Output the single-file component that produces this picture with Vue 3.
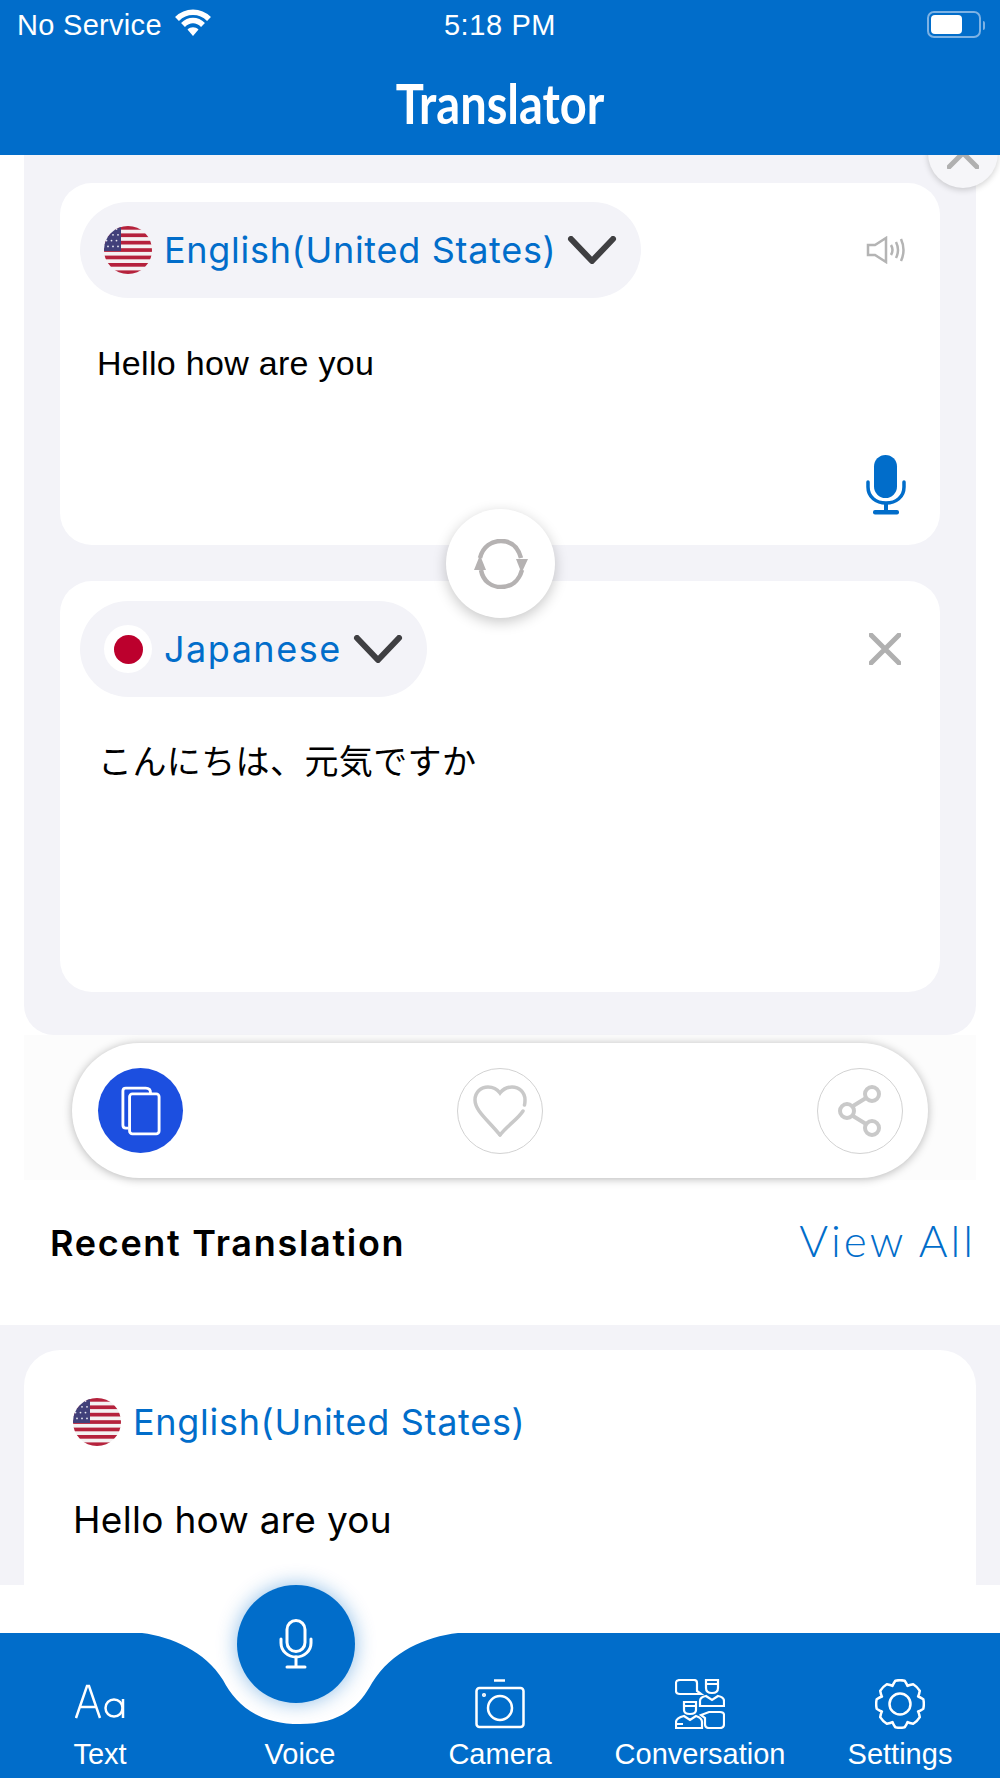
<script setup>
const stripes = [0, 1, 2, 3, 4, 5, 6].map((i) => i * 7.4);
const stars = [];
for (let r = 0; r < 4; r++) for (let c = 0; c < 3; c++) stars.push({ x: 2.500 + c * 5 + (r % 2) * 1.500, y: 3 + r * 5.800 });
const navItems = [
  { id: 'text', label: 'Text' },
  { id: 'voice', label: 'Voice' },
  { id: 'camera', label: 'Camera' },
  { id: 'conv', label: 'Conversation' },
  { id: 'settings', label: 'Settings' },
];
const gearPath = (() => {
  const n = 8, cx = 25, cy = 25;
  let d = '';
  const step = (Math.PI * 2) / n;
  for (let i = 0; i < n; i++) {
    const a = i * step - Math.PI / 2;
    const pt = (o, r) => (cx + Math.cos(a + o) * r).toFixed(1) + ' ' + (cy + Math.sin(a + o) * r).toFixed(1);
    d += (i === 0 ? 'M' + pt(-0.2, 23.8) : 'L' + pt(-0.2, 23.8));
    d += ' Q' + pt(0, 24.4) + ' ' + pt(0.2, 23.8);
    d += ' Q' + pt(step / 2 - 0.06, 21.2) + ' ' + pt(step / 2, 19.6);
    d += ' Q' + pt(step / 2 + 0.06, 21.2) + ' ' + pt(step - 0.2, 23.8) + ' ';
  }
  return d + 'Z';
})();
</script>

<template>
  <div class="screen">
    <header class="header">
      <div class="status">
        <div class="status-left">
          <span>No Service</span>
          <svg class="wifi" viewBox="0 0 38 28" width="38" height="28">
            <path d="M3 10 C12 1 26 1 35 10" />
            <path d="M9 16 C15 10 23 10 29 16" />
            <path class="wifi-dot" d="M13.500 20.500 C16.500 17.500 21.500 17.500 24.500 20.500 L19 27 Z" />
          </svg>
        </div>
        <span class="time">5:18 PM</span>
        <div class="battery">
          <div class="battery-body"><div class="battery-fill"></div></div>
          <div class="battery-cap"></div>
        </div>
      </div>
      <h1 class="title">Translator</h1>
    </header>

    <main class="main">
      <section class="panel">
        <div class="card card-top">
          <div class="card-head">
            <button class="pill">
              <svg class="flag" viewBox="0 0 48 48" width="48" height="48">
                <rect width="48" height="48" fill="#f4f2f2" />
                <rect v-for="y in stripes" :key="y" x="0" :y="y" width="48" height="3.700" fill="#b5223c" />
                <rect width="17" height="25" fill="#41407a" />
                <circle v-for="(s, i) in stars" :key="i" :cx="s.x" :cy="s.y" r="0.900" fill="#e8e8f2" />
              </svg>
              <span class="lang">English(United States)</span>
              <svg class="chev" viewBox="0 0 50 28" width="50" height="28"><path d="M4 3 L25 25 L46 3" /></svg>
            </button>
            <svg class="speaker" viewBox="0 0 40 28" width="40" height="28">
              <path d="M2 9 H9 L20 2 V26 L9 19 H2 Z" />
              <path d="M25 9 Q28 14 25 19" />
              <path d="M30 6 Q34 14 30 22" />
              <path d="M35 3 Q40 14 35 25" />
            </svg>
          </div>
          <p class="source">Hello how are you</p>
          <svg class="mic-blue" viewBox="0 0 40 60" width="40" height="60">
            <rect x="8" y="0" width="23" height="43" rx="11.500" fill="#016dca" />
            <path d="M2 27 V32 C2 42 10 48 20 48 C30 48 38 42 38 32 V27" fill="none" stroke="#016dca" stroke-width="3.500" stroke-linecap="round" />
            <path d="M20 48 V57" stroke="#016dca" stroke-width="4" />
            <rect x="7" y="55" width="26" height="4.500" rx="2" fill="#016dca" />
          </svg>
        </div>

        <div class="card card-bottom">
          <div class="card-head">
            <button class="pill">
              <span class="flag-jp"><span class="flag-jp-dot"></span></span>
              <span class="lang lang-wide">Japanese</span>
              <svg class="chev" viewBox="0 0 50 28" width="50" height="28"><path d="M4 3 L25 25 L46 3" /></svg>
            </button>
            <svg class="close-x" viewBox="0 0 32 32" width="32" height="32"><path d="M2 2 L30 30 M30 2 L2 30" /></svg>
          </div>
          <p class="target">こんにちは、元気ですか</p>
        </div>

        <button class="swap">
          <svg viewBox="0 0 56 50" width="56" height="50">
            <path d="M7 19 C10 7 19 2 28 2 C38 2 45 8 48 19" />
            <path d="M49 31 C46 42 38 48 28 48 C18 48 10 42 8 31" />
            <path class="swap-head" d="M43 20 L55 20 L48.500 34 Z" />
            <path class="swap-head" d="M1 31 L13 31 L7 16 Z" />
          </svg>
        </button>
        <button class="dismiss">
          <svg viewBox="0 0 32 32" width="32" height="32"><path d="M2 2 L30 30 M30 2 L2 30" /></svg>
        </button>
      </section>

      <div class="actions">
        <div class="actions-pill">
          <button class="round round-on">
            <svg viewBox="0 0 42 52" width="40" height="50" fill="none" stroke="#fff" stroke-width="3">
              <path d="M8 44 H5 Q2 44 2 41 V5 Q2 2 5 2 H26 Q31 2 31 7" />
              <rect x="9" y="8" width="31" height="42" rx="3" />
            </svg>
          </button>
          <button class="round">
            <svg viewBox="0 0 54 52" width="54" height="52" fill="none" stroke="#c9c9c9" stroke-width="3.500" stroke-linecap="round">
              <path d="M27 50 C16 36 2 26 2 15 C2 7 8 2 15 2 C20 2 24 4 27 8 C30 4 34 2 39 2 C46 2 52 7 52 15 C52 17 52 18 51.500 20" />
              <path d="M50 26 C45 34 36 39 27 50" />
            </svg>
          </button>
          <button class="round">
            <svg viewBox="0 0 44 52" width="44" height="52" fill="none" stroke="#c9c9c9" stroke-width="4">
              <circle cx="9" cy="26" r="7" />
              <circle cx="34" cy="9" r="7" />
              <circle cx="34" cy="43" r="7" />
              <path d="M15 21 L28 13 M15 31 L28 39" />
            </svg>
          </button>
        </div>
      </div>

      <div class="recent-head">
        <h2 class="recent-title">Recent Translation</h2>
        <a class="view-all">View All</a>
      </div>

      <section class="band">
        <article class="recent-card">
          <div class="recent-lang">
            <svg class="flag" viewBox="0 0 48 48" width="48" height="48">
              <rect width="48" height="48" fill="#f4f2f2" />
              <rect v-for="y in stripes" :key="y" x="0" :y="y" width="48" height="3.700" fill="#b5223c" />
              <rect width="17" height="25" fill="#41407a" />
              <circle v-for="(s, i) in stars" :key="i" :cx="s.x" :cy="s.y" r="0.900" fill="#e8e8f2" />
            </svg>
            <span class="lang">English(United States)</span>
          </div>
          <p class="recent-text">Hello how are you</p>
        </article>
      </section>
    </main>

    <nav class="nav">
      <svg class="nav-bg" viewBox="0 0 1000 145" width="1000" height="145">
        <path d="M0 0 H142 C172 4 205 18 223 47 C236 72 258 91 300 91 C342 91 360 72 372 50 C392 18 425 4 458 0 H1000 V145 H0 Z" fill="#016dca" />
      </svg>
      <div v-for="item in navItems" :key="item.id" class="nav-item">
        <div class="nav-icon">
          <svg v-if="item.id === 'text'" viewBox="0 0 50 50" width="50" height="50" class="ico">
            <path d="M1 39 L12 7 H14 L25 39 M5 28 H21" />
            <circle cx="39" cy="29" r="8.500" />
            <path d="M48 20 V39" />
          </svg>
          <svg v-else-if="item.id === 'camera'" viewBox="0 0 50 50" width="50" height="50" class="ico">
            <path d="M19 1.500 H30" />
            <rect x="1.500" y="9" width="47" height="39" rx="3" />
            <circle cx="25" cy="29" r="12" />
            <circle cx="9" cy="16" r="0.800" />
          </svg>
          <svg v-else-if="item.id === 'conv'" viewBox="0 0 50 50" width="50" height="50" class="ico ico-thin">
            <path d="M5 1 H19 Q22 1 22 4 V12 L26 15 H5 Q1 15 1 12 V4 Q1 1 5 1 Z" />
            <path d="M31 1 H43 V9 Q43 14 37 14 Q31 14 31 9 Z M31 5 H43" />
            <path d="M25 27 V22 Q25 18 31 17 L37 21 L43 17 Q49 18 49 22 V27 H25 Z" />
            <path d="M9 23 H21 V31 Q21 35 15 35 Q9 35 9 31 Z M9 27 H21" />
            <path d="M1 49 V43 Q1 39 9 37 L15 41 L21 37 Q27 39 27 43 V49 Z M1 45 H8" />
            <path d="M34 33 H45 Q49 33 49 36 V45 Q49 49 45 49 H34 Q30 49 30 45 V39 L26 36 Z" />
          </svg>
          <svg v-else-if="item.id === 'settings'" viewBox="0 0 50 50" width="50" height="50" class="ico">
            <path :d="gearPath" stroke-linejoin="round" />
            <circle cx="25" cy="25" r="10.500" />
          </svg>
        </div>
        <span class="nav-label">{{ item.label }}</span>
      </div>
      <button class="mic-fab">
        <svg viewBox="0 0 34 50" width="34" height="50" fill="none" stroke="#fff" stroke-width="3" stroke-linecap="round">
          <rect x="8" y="1.500" width="18" height="31" rx="9" />
          <path d="M2 20 V24 C2 32 9 38 17 38 C25 38 32 32 32 24 V20" />
          <path d="M17 38 V47 M8 48 H26" />
        </svg>
      </button>
    </nav>
  </div>
</template>

<style>
html, body { margin: 0; background: #fff; }
</style>

<style scoped>
.screen {
  width: 1000px;
  height: 1778px;
  display: flex;
  flex-direction: column;
  overflow: hidden;
  background: #fff;
  font-family: "Liberation Sans", Arial, sans-serif;
  position: relative;
}
button { border: 0; padding: 0; margin: 0; font: inherit; cursor: pointer; }
p, h1, h2 { margin: 0; }

.header {
  height: 155px;
  background: #016dca;
  color: #fff;
  position: relative;
  z-index: 2;
  flex: none;
}
.status {
  height: 50px;
  display: flex;
  align-items: center;
  justify-content: space-between;
  padding: 0 15px 0 17px;
  font-size: 29px;
  letter-spacing: 0.300px;
  position: relative;
}
.status-left { display: flex; align-items: center; gap: 12px; }
.wifi { fill: none; stroke: #fff; stroke-width: 5.500; margin-top: -4px; }
.wifi-dot { fill: #fff; stroke: none; }
.time { position: absolute; left: 0; right: 0; text-align: center; letter-spacing: 0.600px; }
.battery { display: flex; align-items: center; gap: 2px; }
.battery-body {
  width: 54px;
  height: 27px;
  border: 2px solid #7db2e4;
  border-radius: 7px;
  padding: 2px;
  box-sizing: border-box;
  display: flex;
  margin-top: -2px;
}
.battery-fill { width: 31px; background: #fff; border-radius: 4px; }
.battery-cap { width: 2px; height: 9px; background: #7db2e4; border-radius: 0 2px 2px 0; }
.title {
  text-align: center;
  font-family: "Lato", sans-serif;
  font-weight: 700;
  font-size: 47px;
  line-height: 50px;
  margin-top: 28px;
  transform: scaleY(1.160);
}

.main { flex: 1; position: relative; min-height: 0; }
.panel {
  margin: 0 24px;
  background: #f3f3f8;
  border-radius: 0 0 30px 30px;
  padding: 28px 36px 43px;
  display: flex;
  flex-direction: column;
  gap: 36px;
  height: 880px;
  box-sizing: border-box;
}
.card {
  background: #fff;
  border-radius: 32px;
  display: flex;
  flex-direction: column;
  box-sizing: border-box;
  padding: 19px 34px 30px 20px;
}
.card-top { height: 362px; }
.card-bottom { height: 411px; }
.card-head { display: flex; align-items: center; justify-content: space-between; }
.pill {
  height: 96px;
  border-radius: 48px;
  background: #f3f3f8;
  display: flex;
  align-items: center;
  padding: 0 24px;
  flex: none;
}
.flag { border-radius: 50%; flex: none; display: block; }
.lang {
  font-family: "Inter", sans-serif;
  font-size: 36px;
  letter-spacing: 0.700px;
  color: #016dca;
  margin-left: 12px;
  white-space: nowrap;
}
.lang-wide { letter-spacing: 1.500px; }
.chev { margin-left: 11px; fill: none; stroke: #3f3f42; stroke-width: 6; stroke-linecap: round; stroke-linejoin: round; }
.speaker { fill: none; stroke: #b4b4b4; stroke-width: 2.500; }
.source {
  font-size: 34px;
  letter-spacing: 0.300px;
  line-height: 40px;
  color: #000;
  margin: 45px 0 0 17px;
}
.mic-blue { align-self: flex-end; margin-top: auto; }
.card-bottom .card-head { margin-top: 1px; }
.close-x { fill: none; stroke: #b0b0b0; stroke-width: 5; stroke-linecap: round; margin-right: 5px; }
.flag-jp {
  width: 48px;
  height: 48px;
  border-radius: 50%;
  background: #fff;
  display: flex;
  align-items: center;
  justify-content: center;
}
.flag-jp-dot { width: 29px; height: 29px; border-radius: 50%; background: #bc002d; }
.target {
  font-family: "Liberation Sans", "Noto Sans CJK JP", sans-serif;
  font-size: 34px;
  letter-spacing: 0.400px;
  line-height: 44px;
  color: #000;
  margin: 43px 0 0 18px;
}
.swap {
  position: absolute;
  left: 446px;
  top: 354px;
  width: 109px;
  height: 109px;
  border-radius: 50%;
  background: #fff;
  box-shadow: 0 4px 14px rgba(0, 0, 0, 0.22);
  display: flex;
  align-items: center;
  justify-content: center;
}
.swap svg { fill: none; stroke: #b5b2b2; stroke-width: 4.500; }
.swap .swap-head { fill: #b5b2b2; stroke: none; }
.dismiss {
  position: absolute;
  left: 928px;
  top: -37px;
  width: 70px;
  height: 70px;
  border-radius: 50%;
  background: #f6f6f9;
  box-shadow: 0 2px 6px rgba(0, 0, 0, 0.18);
  display: flex;
  align-items: center;
  justify-content: center;
}
.dismiss svg { fill: none; stroke: #b0b0b0; stroke-width: 5; stroke-linecap: round; }

.actions {
  margin: 0 24px;
  height: 145px;
  background: #fcfcfc;
  padding: 8px 48px 2px;
  box-sizing: border-box;
}
.actions-pill {
  height: 135px;
  background: #fff;
  border-radius: 68px;
  box-shadow: 0 1px 10px rgba(0, 0, 0, 0.28);
  display: flex;
  align-items: center;
  justify-content: space-between;
  padding: 0 25px 0 26px;
}
.round {
  width: 86px;
  height: 86px;
  border-radius: 50%;
  background: #fff;
  border: 1.500px solid #d2d2d2;
  box-sizing: border-box;
  display: flex;
  align-items: center;
  justify-content: center;
}
.round-on { background: #1c4fe0; border: 0; width: 85px; height: 85px; }

.recent-head {
  height: 145px;
  padding: 0 24px 20px 50px;
  box-sizing: border-box;
  display: flex;
  align-items: center;
  justify-content: space-between;
}
.recent-title {
  font-family: "Inter", sans-serif;
  font-weight: 600;
  font-size: 36px;
  letter-spacing: 1.700px;
  color: #000;
}
.view-all {
  font-family: "Lato", sans-serif;
  font-weight: 300;
  font-size: 44px;
  letter-spacing: 3px;
  color: #016dca;
  margin-top: -6px;
}
.band {
  height: 260px;
  background: #f3f3f8;
  padding: 25px 24px 0;
  box-sizing: border-box;
}
.recent-card {
  height: 235px;
  background: #fff;
  border-radius: 36px 36px 0 0;
  padding: 48px 49px 0;
  box-sizing: border-box;
}
.recent-lang { display: flex; align-items: center; }
.recent-text {
  font-family: "Inter", sans-serif;
  font-size: 37px;
  letter-spacing: 0.300px;
  line-height: 44px;
  color: #000;
  margin-top: 52px;
}

.nav {
  height: 145px;
  flex: none;
  position: relative;
  display: grid;
  grid-template-columns: repeat(5, 200px);
  color: #fff;
}
.nav-bg { position: absolute; left: 0; top: 0; display: block; }
.nav-item {
  position: relative;
  display: flex;
  flex-direction: column;
  align-items: center;
  padding-top: 46px;
}
.nav-icon { height: 50px; }
.ico { fill: none; stroke: #fff; stroke-width: 2.500; display: block; }
.ico-thin { stroke-width: 2.200; }
.nav-label { font-size: 29px; line-height: 32px; margin-top: 9px; }
.mic-fab {
  position: absolute;
  left: 237px;
  top: -48px;
  width: 118px;
  height: 118px;
  border-radius: 50%;
  background: #016dca;
  box-shadow: 0 0 20px rgba(1, 109, 202, 0.45);
  display: flex;
  align-items: center;
  justify-content: center;
}
</style>
